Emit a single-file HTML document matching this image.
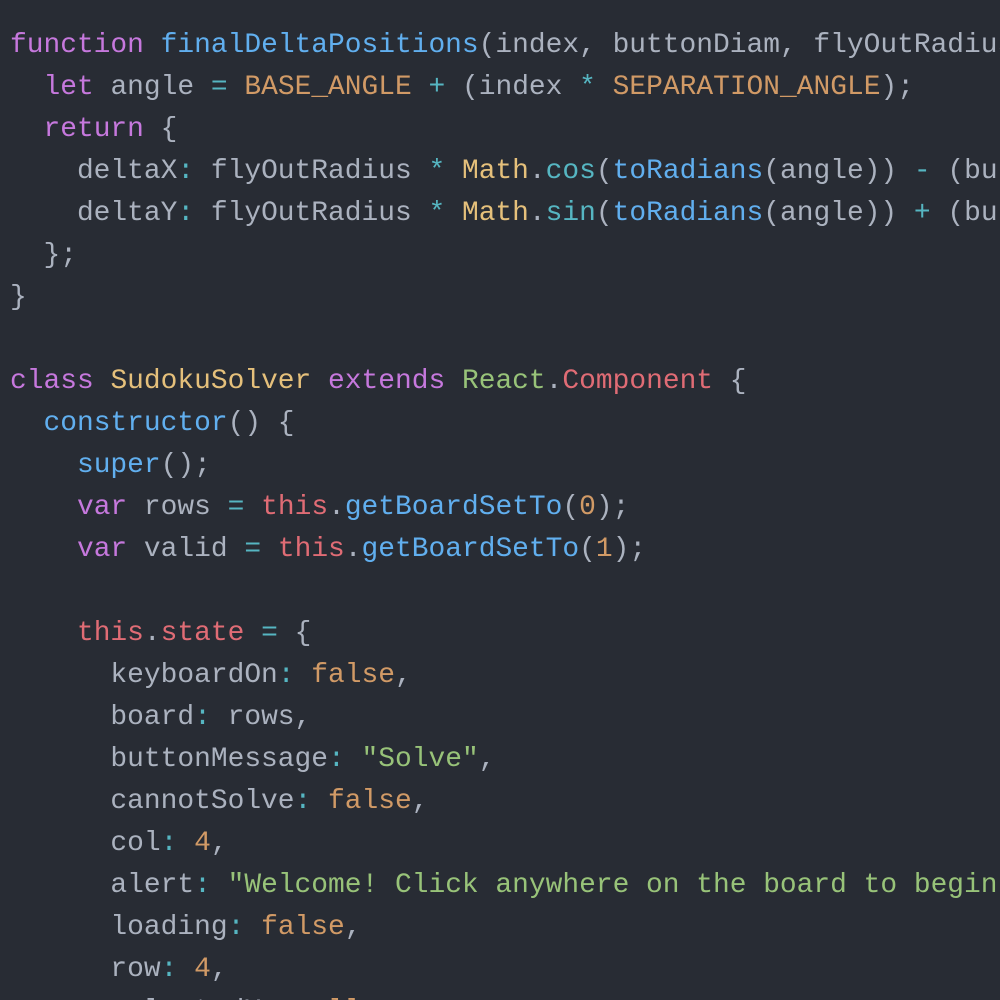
<!DOCTYPE html>
<html><head><meta charset="utf-8"><style>
html,body{margin:0;padding:0;background:#282c34;width:1000px;height:1000px;overflow:hidden}
pre{margin:0;padding:25px 0 0 10px;width:990px;height:975px;overflow:hidden;font-family:"Liberation Mono",monospace;font-size:27.9px;line-height:42px;color:#abb2bf;white-space:pre}
.k{color:#c678dd}.f{color:#61afef}.o{color:#d19a66}.c{color:#56b6c2}.y{color:#e5c07b}.r{color:#e06c75}.g{color:#98c379}
</style></head><body><pre><span class="k">function</span> <span class="f">finalDeltaPositions</span>(index, buttonDiam, flyOutRadius) {
  <span class="k">let</span> angle <span class="c">=</span> <span class="o">BASE_ANGLE</span> <span class="c">+</span> (index <span class="c">*</span> <span class="o">SEPARATION_ANGLE</span>);
  <span class="k">return</span> {
    deltaX<span class="c">:</span> flyOutRadius <span class="c">*</span> <span class="y">Math</span>.<span class="c">cos</span>(<span class="f">toRadians</span>(angle)) <span class="c">-</span> (buttonDiam
    deltaY<span class="c">:</span> flyOutRadius <span class="c">*</span> <span class="y">Math</span>.<span class="c">sin</span>(<span class="f">toRadians</span>(angle)) <span class="c">+</span> (buttonDiam
  };
}

<span class="k">class</span> <span class="y">SudokuSolver</span> <span class="k">extends</span> <span class="g">React</span>.<span class="r">Component</span> {
  <span class="f">constructor</span>() {
    <span class="f">super</span>();
    <span class="k">var</span> rows <span class="c">=</span> <span class="r">this</span>.<span class="f">getBoardSetTo</span>(<span class="o">0</span>);
    <span class="k">var</span> valid <span class="c">=</span> <span class="r">this</span>.<span class="f">getBoardSetTo</span>(<span class="o">1</span>);

    <span class="r">this</span>.<span class="r">state</span> <span class="c">=</span> {
      keyboardOn<span class="c">:</span> <span class="o">false</span>,
      board<span class="c">:</span> rows,
      buttonMessage<span class="c">:</span> <span class="g">"Solve"</span>,
      cannotSolve<span class="c">:</span> <span class="o">false</span>,
      col<span class="c">:</span> <span class="o">4</span>,
      alert<span class="c">:</span> <span class="g">"Welcome! Click anywhere on the board to begin"</span>,
      loading<span class="c">:</span> <span class="o">false</span>,
      row<span class="c">:</span> <span class="o">4</span>,
      selectedX<span class="c">:</span> <span class="o">null</span>,
</pre></body></html>
